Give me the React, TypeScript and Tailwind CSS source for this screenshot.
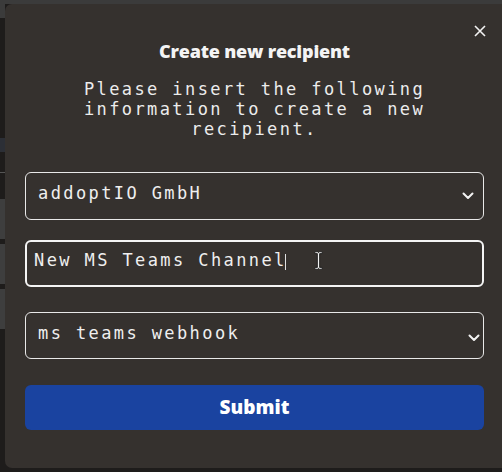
import React from "react";

const mono = { fontFamily: '"DejaVu Sans Mono", monospace' };
const heading = { fontFamily: '"Open Sans", Lato, sans-serif' };

function Chevron({ className }: { className?: string }) {
  return (
    <svg className={className} width="12" height="8" viewBox="0 0 12 8" fill="none">
      <path d="M1.5 1.5 L6 6 L10.5 1.5" stroke="#f2f2f2" strokeWidth="2" strokeLinecap="round" strokeLinejoin="round" />
    </svg>
  );
}

export default function App() {
  return (
    <div className="w-[502px] h-[472px] bg-[#1e1c1b] overflow-hidden flex flex-col">
      <div className="h-[4px] bg-[#3b3b3b] shrink-0" />
      <div className="flex flex-1 min-h-0">
        <div className="w-[5px] shrink-0 flex flex-col">
          <div className="h-[14px] bg-[#3b3b3b]" />
          <div className="h-[120px]" />
          <div className="h-[14px] bg-[#2c2f36]" />
          <div className="h-[20px]" />
          <div className="h-px bg-[#555]" />
          <div className="h-[26px]" />
          <div className="h-[40px] bg-[#3e3e3e]" />
          <div className="h-[5px]" />
          <div className="h-[40px] bg-[#3e3e3e]" />
          <div className="h-[5px]" />
          <div className="h-[40px] bg-[#3e3e3e]" />
        </div>
        <div className="flex-1 mb-[4px] bg-[#35312e] rounded-l-[7px] relative pt-[35px] pl-[20px]">
          <button className="absolute left-[469px] top-[21px] w-[12px] h-[12px]">
            <svg width="12" height="12" viewBox="0 0 12 12" fill="none">
              <path d="M1 1 L11 11 M11 1 L1 11" stroke="#f2f2f2" strokeWidth="1.6" />
            </svg>
          </button>
          <div className="w-[459px] flex flex-col">
            <h2
              className="text-center text-[18px] leading-[24px] font-extrabold text-[#f4f4f4] tracking-[-0.2px]"
              style={heading}
            >
              Create new recipient
            </h2>
            <p
              className="mt-[16px] text-center text-[17px] leading-[20px] tracking-[2.4px] text-[#ececec]"
              style={mono}
            >
              Please insert the following
              <br />
              information to create a new
              <br />
              recipient.
            </p>
            <div className="mt-[33px] h-[48px] rounded-[6px] border border-[#e8e8e8] flex items-center pl-[12px] pr-[9px]">
              <span className="text-[17px] tracking-[2.4px] text-[#efefef] -mt-[5px] flex-1" style={mono}>
                addoptIO GmbH
              </span>
              <Chevron />
            </div>
            <div className="mt-[20px] h-[47px] rounded-[6px] border-2 border-[#f4f4f4] flex items-center pl-[7px] relative">
              <span className="text-[17px] tracking-[2.4px] text-[#efefef] -mt-[5px]" style={mono}>
                New MS Teams Channel
              </span>
              <span className="w-px h-[16px] bg-[#e0e0e0] -ml-[2px] -mt-[4px]" />
              <svg className="absolute left-[287px] top-[9px]" width="9" height="19" viewBox="0 0 9 19">
                <path
                  d="M0.8 0.8 H3.6 L4.5 1.7 L5.4 0.8 H8.2 V2.6 H5.6 V16.4 H8.2 V18.2 H5.4 L4.5 17.3 L3.6 18.2 H0.8 V16.4 H3.4 V2.6 H0.8 Z"
                  fill="#f4f4f4"
                  stroke="#111"
                  strokeWidth="0.8"
                />
              </svg>
            </div>
            <div className="mt-[25px] h-[47px] rounded-[6px] border border-[#e8e8e8] flex items-center pl-[12px] pr-[3px]">
              <span className="text-[17px] tracking-[2.4px] text-[#efefef] -mt-[4px] flex-1" style={mono}>
                ms teams webhook
              </span>
              <Chevron className="mt-[4px]" />
            </div>
            <button
              className="mt-[26px] h-[45px] rounded-[6px] bg-[#1a43a0] text-white text-[19px] font-extrabold"
              style={heading}
            >
              Submit
            </button>
          </div>
        </div>
      </div>
    </div>
  );
}
